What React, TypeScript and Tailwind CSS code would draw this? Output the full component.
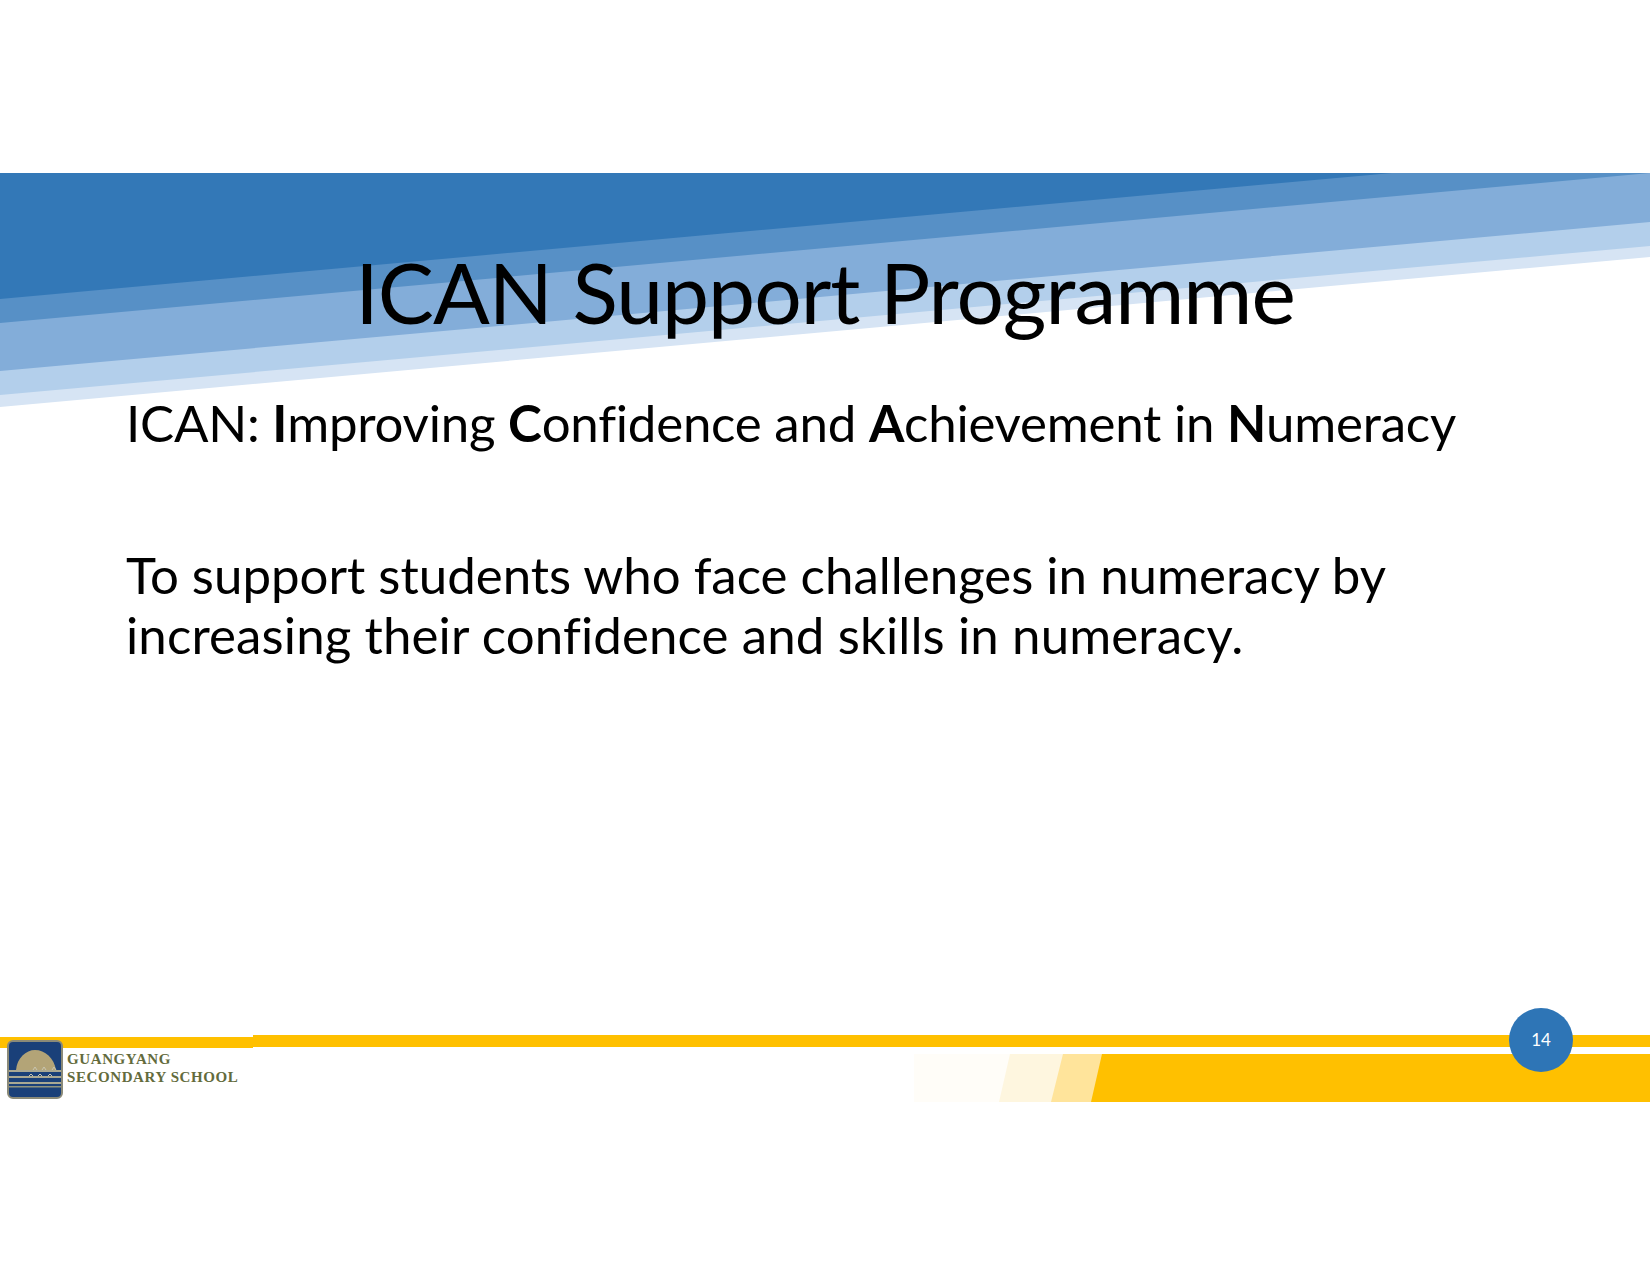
const bodyFont = "font-['Lato','Carlito','Noto_Sans',sans-serif]";

const Banner: React.FC = () => {
  return (
    <svg
      className="absolute left-0 top-0"
      width="1650"
      height="240"
      viewBox="0 173 1650 240"
    >
      <polygon points="0,173 1650,173 1650,257 0,407" fill="#d6e4f4" />
      <polygon points="0,173 1650,173 1650,246 0,395" fill="#b3cfeb" />
      <polygon points="0,173 1650,173 1650,222 0,371" fill="#83add9" />
      <polygon points="0,173 1650,173 0,323" fill="#5790c6" />
      <polygon points="0,173 1392,173 0,299" fill="#3378b7" />
    </svg>
  );
};

const Logo: React.FC = () => {
  return (
    <svg width="56" height="59" viewBox="0 0 56 59" className="shrink-0">
      <rect x="1" y="1" width="54" height="57" rx="5" fill="#1a4079" stroke="#8b8a78" strokeWidth="2" />
      <path d="M9 30 C10 18 19 10 28 10 C38 10 47 18 49 30 Z" fill="#b3a477" />
      <rect x="2" y="30" width="52" height="2" fill="#a9a893" />
      <rect x="2" y="36" width="52" height="2" fill="#a9a893" />
      <rect x="2" y="42" width="52" height="2" fill="#a9a893" />
      <rect x="2" y="46" width="52" height="1.5" fill="#8f937f" />
      <path
        d="M26 30 l2 -3 l2 3 M35 30 l2 -3 l2 3 M45 30 l2 -3 l2 3 M22 36 l2 -2 l2 2 M31 36 l2 -2 l2 2 M41 36 l2 -2 l2 2"
        stroke="#c9c6b2"
        strokeWidth="1"
        fill="none"
      />
    </svg>
  );
};

const Stripes: React.FC = () => {
  return (
    <svg
      className="absolute left-0 top-0"
      width="1650"
      height="72"
      viewBox="0 1033 1650 72"
    >
      <rect x="0" y="1036" width="253" height="11" fill="#ffc000" />
      <rect x="253" y="1034" width="1397" height="12" fill="#ffc000" />
      <rect x="914" y="1053" width="189" height="48" fill="#fffdf8" />
      <polygon points="1010,1053 1103,1053 1103,1101 999,1101" fill="#fef6df" />
      <polygon points="1063,1053 1103,1053 1103,1101 1051,1101" fill="#ffe49b" />
      <polygon points="1102,1053 1650,1053 1650,1101 1091,1101" fill="#ffc000" />
    </svg>
  );
};

const App: React.FC = () => {
  return (
    <div className={`w-[1650px] h-[1275px] bg-white overflow-hidden text-black ${bodyFont}`}>
      <div className="h-[173px]"></div>

      <div className="relative h-[220px]">
        <Banner />
        <h1 className="relative pt-[76px] text-center text-[84px] leading-[85px] font-normal tracking-[-1px]">
          ICAN Support Programme
        </h1>
      </div>

      <div className="pl-[126px] text-[51px] leading-[60px]">
        <p className="tracking-[-0.22px]">
          ICAN: <b>I</b>mproving <b>C</b>onfidence and <b>A</b>chievement in <b>N</b>umeracy
        </p>
        <p className="mt-[92px]">
          To support students who face challenges in numeracy by
          <br />
          <span className="tracking-[0.12px]">increasing their confidence and skills in numeracy.</span>
        </p>
      </div>

      <div className="h-[369px]"></div>

      <div className="relative h-[72px]">
        <Stripes />
        <div className="absolute left-[1509px] top-[-26px] w-16 h-16 rounded-full bg-[#2e75b6] flex items-center justify-center text-white text-[17px]">
          14
        </div>
        <div className="relative flex items-center gap-[4px] pl-[7px] pt-[6px]">
          <Logo />
          <div className="pb-[4px] font-['Liberation_Serif',serif] font-bold text-[#636b3c] text-[15px] leading-[18px] tracking-[0.6px]">
            GUANGYANG
            <br />
            SECONDARY SCHOOL
          </div>
        </div>
      </div>
    </div>
  );
};

export default App;
